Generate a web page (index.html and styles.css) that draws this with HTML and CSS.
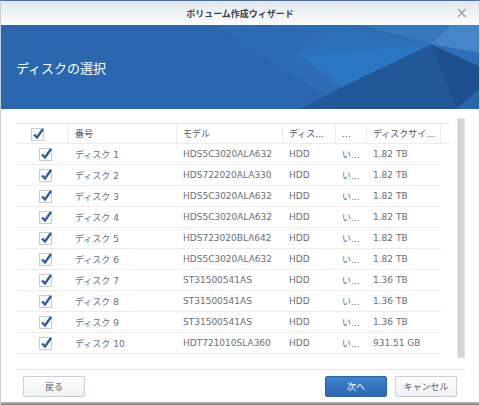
FILE: index.html
```html
<!DOCTYPE html>
<html lang="ja">
<head>
<meta charset="utf-8">
<link rel="stylesheet" href="styles.css">
</head>
<body>
<div class="win">
  <div class="titlebar">
    <span class="title">ボリューム作成ウィザード</span>
    <span class="close">×</span>
  </div>
  <div class="banner">
    <svg class="facets" viewBox="0 0 480 83" preserveAspectRatio="none">
      <polygon points="215,0 480,0 480,83 345,83" fill="#2d6cb2"/>
      <polygon points="330,0 430,19 340,62 300,30" fill="#2b71ba"/>
      <polygon points="300,30 430,19 340,62" fill="#2a76c2"/>
      <polygon points="360,0 450,0 430,19" fill="#3676ba"/>
      <polygon points="430,19 450,0 480,0 480,28" fill="#4586c6"/>
      <polygon points="430,19 480,28 480,42" fill="#2c6fb6"/>
      <polygon points="430,19 480,42 480,83 455,83" fill="#1e4f8e"/>
      <polygon points="340,62 430,19 455,83 300,83" fill="#215897"/>
      <polygon points="455,83 480,62 480,83" fill="#2866ab"/>
    </svg>
    <h1 class="heading">ディスクの選択</h1>
  </div>
  <div class="content">
    <div class="listarea">
      <div class="grid">
        <div class="row head">
          <div class="cell chk head-chk"><svg class="cb" viewBox="0 0 16 16"><rect x="1.5" y="2.5" width="12" height="12" fill="#fbfcfd" stroke="#c6ccd3"/><path d="M4 8.5 L7 11.5 L13 3" fill="none" stroke="#2d5f9b" stroke-width="2.4"/></svg></div>
          <div class="cell">番号</div>
          <div class="cell">モデル</div>
          <div class="cell">ディス...</div>
          <div class="cell">...</div>
          <div class="cell">ディスクサイ...</div>
          <div class="cell filler"></div>
        </div>
        <div class="row"><div class="cell chk"><svg class="cb" viewBox="0 0 16 16"><rect x="1.5" y="2.5" width="12" height="12" fill="#fbfcfd" stroke="#c6ccd3"/><path d="M4 8.5 L7 11.5 L13 3" fill="none" stroke="#2d5f9b" stroke-width="2.4"/></svg></div><div class="cell">ディスク 1</div><div class="cell">HDS5C3020ALA632</div><div class="cell">HDD</div><div class="cell">い...</div><div class="cell">1.82 TB</div></div>
        <div class="row"><div class="cell chk"><svg class="cb" viewBox="0 0 16 16"><rect x="1.5" y="2.5" width="12" height="12" fill="#fbfcfd" stroke="#c6ccd3"/><path d="M4 8.5 L7 11.5 L13 3" fill="none" stroke="#2d5f9b" stroke-width="2.4"/></svg></div><div class="cell">ディスク 2</div><div class="cell">HDS722020ALA330</div><div class="cell">HDD</div><div class="cell">い...</div><div class="cell">1.82 TB</div></div>
        <div class="row"><div class="cell chk"><svg class="cb" viewBox="0 0 16 16"><rect x="1.5" y="2.5" width="12" height="12" fill="#fbfcfd" stroke="#c6ccd3"/><path d="M4 8.5 L7 11.5 L13 3" fill="none" stroke="#2d5f9b" stroke-width="2.4"/></svg></div><div class="cell">ディスク 3</div><div class="cell">HDS5C3020ALA632</div><div class="cell">HDD</div><div class="cell">い...</div><div class="cell">1.82 TB</div></div>
        <div class="row"><div class="cell chk"><svg class="cb" viewBox="0 0 16 16"><rect x="1.5" y="2.5" width="12" height="12" fill="#fbfcfd" stroke="#c6ccd3"/><path d="M4 8.5 L7 11.5 L13 3" fill="none" stroke="#2d5f9b" stroke-width="2.4"/></svg></div><div class="cell">ディスク 4</div><div class="cell">HDS5C3020ALA632</div><div class="cell">HDD</div><div class="cell">い...</div><div class="cell">1.82 TB</div></div>
        <div class="row"><div class="cell chk"><svg class="cb" viewBox="0 0 16 16"><rect x="1.5" y="2.5" width="12" height="12" fill="#fbfcfd" stroke="#c6ccd3"/><path d="M4 8.5 L7 11.5 L13 3" fill="none" stroke="#2d5f9b" stroke-width="2.4"/></svg></div><div class="cell">ディスク 5</div><div class="cell">HDS723020BLA642</div><div class="cell">HDD</div><div class="cell">い...</div><div class="cell">1.82 TB</div></div>
        <div class="row"><div class="cell chk"><svg class="cb" viewBox="0 0 16 16"><rect x="1.5" y="2.5" width="12" height="12" fill="#fbfcfd" stroke="#c6ccd3"/><path d="M4 8.5 L7 11.5 L13 3" fill="none" stroke="#2d5f9b" stroke-width="2.4"/></svg></div><div class="cell">ディスク 6</div><div class="cell">HDS5C3020ALA632</div><div class="cell">HDD</div><div class="cell">い...</div><div class="cell">1.82 TB</div></div>
        <div class="row"><div class="cell chk"><svg class="cb" viewBox="0 0 16 16"><rect x="1.5" y="2.5" width="12" height="12" fill="#fbfcfd" stroke="#c6ccd3"/><path d="M4 8.5 L7 11.5 L13 3" fill="none" stroke="#2d5f9b" stroke-width="2.4"/></svg></div><div class="cell">ディスク 7</div><div class="cell">ST31500541AS</div><div class="cell">HDD</div><div class="cell">い...</div><div class="cell">1.36 TB</div></div>
        <div class="row"><div class="cell chk"><svg class="cb" viewBox="0 0 16 16"><rect x="1.5" y="2.5" width="12" height="12" fill="#fbfcfd" stroke="#c6ccd3"/><path d="M4 8.5 L7 11.5 L13 3" fill="none" stroke="#2d5f9b" stroke-width="2.4"/></svg></div><div class="cell">ディスク 8</div><div class="cell">ST31500541AS</div><div class="cell">HDD</div><div class="cell">い...</div><div class="cell">1.36 TB</div></div>
        <div class="row"><div class="cell chk"><svg class="cb" viewBox="0 0 16 16"><rect x="1.5" y="2.5" width="12" height="12" fill="#fbfcfd" stroke="#c6ccd3"/><path d="M4 8.5 L7 11.5 L13 3" fill="none" stroke="#2d5f9b" stroke-width="2.4"/></svg></div><div class="cell">ディスク 9</div><div class="cell">ST31500541AS</div><div class="cell">HDD</div><div class="cell">い...</div><div class="cell">1.36 TB</div></div>
        <div class="row"><div class="cell chk"><svg class="cb" viewBox="0 0 16 16"><rect x="1.5" y="2.5" width="12" height="12" fill="#fbfcfd" stroke="#c6ccd3"/><path d="M4 8.5 L7 11.5 L13 3" fill="none" stroke="#2d5f9b" stroke-width="2.4"/></svg></div><div class="cell">ディスク 10</div><div class="cell">HDT721010SLA360</div><div class="cell">HDD</div><div class="cell">い...</div><div class="cell">931.51 GB</div></div>
      </div>
      <div class="scrollbar"></div>
    </div>
    <div class="footer">
      <button class="btn">戻る</button>
      <div class="spacer"></div>
      <button class="btn primary">次へ</button>
      <button class="btn">キャンセル</button>
    </div>
  </div>
</div>
</body>
</html>
```

FILE: styles.css
```css
* { box-sizing: border-box; }
html, body { margin: 0; padding: 0; background: #ffffff; }
body {
  width: 480px;
  height: 405px;
  overflow: hidden;
  font-family: "DejaVu Sans", "Noto Sans CJK JP", sans-serif;
}
.win {
  width: 480px;
  height: 405px;
  border-top: 1px solid #4b6f9c;
  border-left: 1px solid #c9ced6;
  border-right: 1px solid #c9ced6;
  display: flex;
  flex-direction: column;
  position: relative;
  background: #fff;
}
.win::after {
  content: "";
  position: absolute;
  left: 0; right: 0; bottom: 0;
  height: 3px;
  background: linear-gradient(#b9b9b9, #7d7d7d);
}
.titlebar {
  height: 24px;
  flex: none;
  background: linear-gradient(#e2e8ef, #fbfcfd);
  display: flex;
  align-items: center;
  justify-content: center;
  position: relative;
}
.title {
  font-family: "Noto Sans CJK JP", sans-serif;
  font-size: 9px;
  font-weight: bold;
  color: #3a4250;
}
.close {
  position: absolute;
  right: 11px;
  top: 3px;
  font-family: "DejaVu Sans", sans-serif;
  font-size: 15px;
  line-height: 18px;
  color: #a0a4aa;
}
.banner {
  height: 84px;
  flex: none;
  background: #2b67ae;
  position: relative;
  overflow: hidden;
  display: flex;
  align-items: center;
}
.facets {
  position: absolute;
  left: 0; top: 0;
  width: 480px;
  height: 84px;
}
.heading {
  position: relative;
  margin: 0 0 0 15px;
  font-family: "Noto Sans CJK JP", sans-serif;
  font-weight: normal;
  font-size: 13px;
  color: #ffffff;
}
.content {
  flex: 1;
  padding: 9px 14px 0 15px;
  display: flex;
  flex-direction: column;
}
.listarea {
  display: flex;
  height: 240px;
  flex: none;
}
.grid {
  width: 434px;
  padding-top: 5px;
}
.row {
  display: grid;
  grid-template-columns: 53px 108px 106px 53px 31px 74px;
  height: 21px;
  border-bottom: 1px solid #ececec;
  width: 425px;
  font-size: 9px;
  color: #6a6e74;
}
.row.head {
  grid-template-columns: 53px 108px 106px 53px 31px 74px 9px;
  width: 434px;
  border-top: 1px solid #e8e8e8;
  color: #50555c;
}
.cell {
  display: flex;
  align-items: center;
  padding-left: 6px;
  white-space: nowrap;
  overflow: hidden;
}
.head .cell { border-right: 1px solid #ececec; }
.head .cell.filler { border-right: none; }
.cell.chk { padding-left: 22px; }
.head .cell.head-chk { padding-left: 14px; }
.cb { width: 16px; height: 16px; display: block; }
.scrollbar {
  margin-left: 7px;
  width: 8px;
  height: 240px;
  background: #d3d3d3;
  border: 1px solid #e4e4e4;
}
.footer {
  margin-top: 11px;
  border-top: 1px solid #e1e3e6;
  display: flex;
  align-items: flex-start;
  padding: 6px 8px 0 7px;
  gap: 8px;
}
.spacer { flex: 1; }
.btn {
  width: 62px;
  height: 21px;
  padding: 0;
  border: 1px solid #c9d0d8;
  border-radius: 2px;
  background: linear-gradient(#fdfdfe, #eef1f4);
  font-family: "Noto Sans CJK JP", sans-serif;
  font-size: 9px;
  color: #5a6068;
}
.btn.primary {
  border-color: #2a62a8;
  background: linear-gradient(#3f82cf, #2a67b5);
  color: #ffffff;
}
```
